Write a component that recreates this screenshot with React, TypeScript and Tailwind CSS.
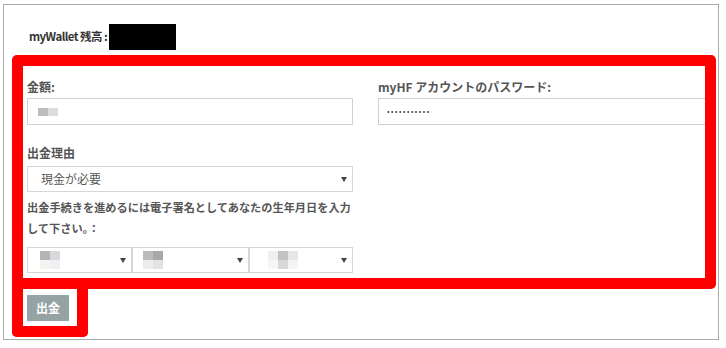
// Withdrawal form with a red annotation frame over it

const jp = '[font-family:"Noto_Sans_CJK_JP","Noto_Sans",sans-serif]';

function Arrow() {
  return (
    <svg width="6" height="5" viewBox="0 0 6 5" className="shrink-0">
      <path d="M0 0 H6 L3 5 Z" fill="#444" />
    </svg>
  );
}

function Blur({ cells }: { cells: string[] }) {
  return (
    <div className="grid grid-cols-[repeat(auto-fill,10px)] grid-flow-col grid-rows-2">
      {cells.map((c, i) => (
        <div key={i} className="w-[10px] h-[9px]" style={{ background: c }} />
      ))}
    </div>
  );
}

function DateSelect({ width, cells, pad }: { width: string; cells: string[]; pad: string }) {
  return (
    <div className={`${width} h-[26px] border border-[#d6d6d6] flex items-center justify-between ${pad} pr-[5px]`}>
      <Blur cells={cells} />
      <Arrow />
    </div>
  );
}

export default function App() {
  return (
    <div className={`w-[726px] h-[348px] bg-white pt-[4px] pl-[3px] ${jp}`}>
      <div className="relative w-[716px] h-[336px] border border-[#ababab]">
        {/* balance */}
        <div className="flex items-center pt-[19px] pl-[25px] h-[45px]">
          <span className="text-[11.5px] font-bold text-[#333] whitespace-nowrap tracking-[-0.55px]">myWallet 残高</span>
          <span className="text-[11.5px] font-bold text-[#333] ml-[2px]">:</span>
          <div className="w-[67px] h-[26px] bg-black ml-[1px]" />
        </div>

        {/* form */}
        <div className="flex mt-[30px] pl-[23px]">
          <div className="flex flex-col w-[326px]">
            <label className="text-[12px] leading-[14px] font-bold text-[#555]">金額:</label>
            <div className="mt-[4px] h-[27px] border border-[#d0d0d0] flex items-center pl-[10px]">
              <div className="flex">
                <div className="w-[10px] h-[8px] bg-[#bdbdbd]" />
                <div className="w-[10px] h-[8px] bg-[#dcdcdc]" />
              </div>
            </div>

            <label className="mt-[21px] text-[12px] leading-[14px] font-bold text-[#555]">出金理由</label>
            <div className="mt-[6px] h-[26px] border border-[#d6d6d6] flex items-center justify-between pl-[13px] pr-[5px]">
              <span className="text-[12px] text-[#555]">現金が必要</span>
              <Arrow />
            </div>

            <label className="mt-[5px] text-[11.2px] leading-[21px] font-bold text-[#555] whitespace-nowrap">
              出金手続きを進めるには電子署名としてあなたの生年月日を入力
              <br />
              して下さい。：
            </label>
            <div className="mt-[8px] flex">
              <DateSelect width="w-[105px]" pad="pl-[12px]" cells={['#b4b4b4', '#f4f4ee', '#d6d8dc', '#eef0f4']} />
              <DateSelect width="w-[117px]" pad="pl-[10px]" cells={['#bbbbbb', '#ececec', '#a8a8a8', '#e2e2e2']} />
              <DateSelect
                width="w-[104px]"
                pad="pl-[18px]"
                cells={['#f0f0f0', '#f6f6f6', '#c2c2c2', '#d8d8d8', '#e6e6e6', '#f4f4f4']}
              />
            </div>

            <button className="mt-[22px] w-[42px] h-[26px] bg-[#95a3a4] text-white text-[12px] font-bold">
              出金
            </button>
          </div>

          <div className="flex flex-col ml-[25px] w-[334px]">
            <label className="text-[12px] leading-[14px] font-bold text-[#555] whitespace-nowrap">
              myHF アカウントのパスワード:
            </label>
            <div className="mt-[4px] h-[27px] border border-[#d0d0d0] flex items-center pl-[8px]">
              <span className="text-[7px] tracking-[1.6px] text-[#444]">•••••••••••</span>
            </div>
          </div>
        </div>

        {/* red annotation frame */}
        <div className="absolute left-[8px] top-[50px] w-[704px] h-[234px] border-[11px] border-[#ff0000] rounded-tl-[5px] rounded-tr-[5px] rounded-br-[5px]" />
        <div className="absolute left-[8px] top-[284px] w-[76px] h-[48px] border-[11px] border-t-0 border-[#ff0000] rounded-b-[5px]" />
      </div>
    </div>
  );
}
